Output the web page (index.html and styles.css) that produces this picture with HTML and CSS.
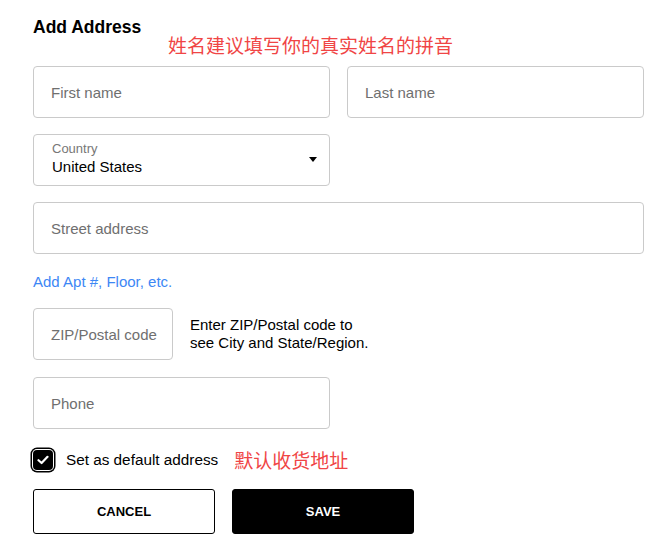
FILE: index.html
```html
<!DOCTYPE html>
<html lang="en">
<head>
    <meta charset="UTF-8">
    <meta name="viewport" content="width=device-width, initial-scale=1.0">
    <link rel="stylesheet" href="styles.css">
    <title>Add Address</title>
</head>
<body>
    <form class="address-form">
        <h2 class="title">Add Address</h2>
        <p class="note">姓名建议填写你的真实姓名的拼音</p>

        <div class="row two">
            <div class="field"><span class="placeholder">First name</span></div>
            <div class="field"><span class="placeholder">Last name</span></div>
        </div>

        <div class="row two">
            <div class="field select">
                <div class="select-text">
                    <span class="select-label">Country</span>
                    <span class="select-value">United States</span>
                </div>
                <span class="arrow"></span>
            </div>
        </div>

        <div class="row">
            <div class="field"><span class="placeholder">Street address</span></div>
        </div>

        <a class="add-link" href="#">Add Apt #, Floor, etc.</a>

        <div class="zip-row">
            <div class="field zip"><span class="placeholder">ZIP/Postal code</span></div>
            <p class="zip-hint">Enter ZIP/Postal code to<br>see City and State/Region.</p>
        </div>

        <div class="row two">
            <div class="field"><span class="placeholder">Phone</span></div>
        </div>

        <label class="check-row">
            <span class="checkbox">
                <svg width="12" height="10" viewBox="0 0 12 10">
                    <path d="M1.5 5.2 L4.6 8 L10.5 1.8" fill="none" stroke="#fff" stroke-width="2.2" stroke-linecap="round" stroke-linejoin="round"/>
                </svg>
            </span>
            <span class="check-text">Set as default address</span>
            <span class="note small">默认收货地址</span>
        </label>

        <div class="buttons">
            <button type="button" class="btn cancel">CANCEL</button>
            <button type="button" class="btn save">SAVE</button>
        </div>
    </form>
</body>
</html>
```

FILE: styles.css
```css
* {
    margin: 0;
    padding: 0;
    box-sizing: border-box;
}
body {
    background: #fff;
    font-family: "Liberation Sans", Arial, sans-serif;
    color: #000;
}
.address-form {
    width: 644px;
    padding: 17px 0 0 33px;
}
.title {
    font-size: 17.5px;
    font-weight: bold;
    line-height: 20px;
}
.note {
    font-family: "Noto Sans CJK SC", sans-serif;
    color: #f04545;
    font-size: 19px;
    line-height: 20px;
    margin: -2px 0 11px 135px;
}
.row {
    display: grid;
    grid-template-columns: 1fr;
    gap: 17px;
    margin-bottom: 16px;
}
.row.two {
    grid-template-columns: 297px 297px;
}
.field {
    height: 52px;
    border: 1px solid #cacaca;
    border-radius: 4px;
    display: flex;
    align-items: center;
    padding-left: 17px;
    font-size: 15px;
}
.placeholder {
    color: #6f6f6f;
}
.select {
    justify-content: space-between;
    padding-left: 18px;
    padding-right: 12px;
}
.select-text {
    display: flex;
    flex-direction: column;
    align-self: flex-start;
    margin-top: 7px;
}
.select-label {
    font-size: 13px;
    line-height: 14px;
    color: #777;
    margin-bottom: 2px;
}
.select-value {
    font-size: 15px;
    line-height: 18px;
    color: #000;
}
.arrow {
    width: 0;
    height: 0;
    border-left: 4px solid transparent;
    border-right: 4px solid transparent;
    border-top: 5px solid #000;
    margin-top: -2px;
}
.add-link {
    display: block;
    width: max-content;
    margin: 19px 0 17px;
    font-size: 15px;
    line-height: 18px;
    color: #3d87f5;
    text-decoration: none;
}
.zip-row {
    display: flex;
    align-items: center;
    gap: 17px;
    margin-bottom: 17px;
}
.zip {
    width: 140px;
}
.zip-hint {
    font-size: 15px;
    line-height: 18px;
}
.check-row {
    display: flex;
    align-items: center;
    height: 24px;
    margin: 19px 0 17px;
}
.checkbox {
    width: 20px;
    height: 20px;
    background: #000;
    border-radius: 4px;
    display: flex;
    align-items: center;
    justify-content: center;
    box-shadow: 0 0 0 1px #fff, 0 0 0 2.5px #000;
}
.check-text {
    font-size: 15.3px;
    margin-left: 13px;
}
.note.small {
    margin: 0 0 0 16px;
    line-height: 24px;
}
.buttons {
    display: flex;
    gap: 17px;
}
.btn {
    width: 182px;
    height: 45px;
    border-radius: 3px;
    font-family: "Liberation Sans", Arial, sans-serif;
    font-size: 13px;
    font-weight: bold;
    cursor: pointer;
}
.cancel {
    background: #fff;
    color: #000;
    border: 1px solid #000;
}
.save {
    background: #000;
    color: #fff;
    border: 1px solid #000;
}
```
